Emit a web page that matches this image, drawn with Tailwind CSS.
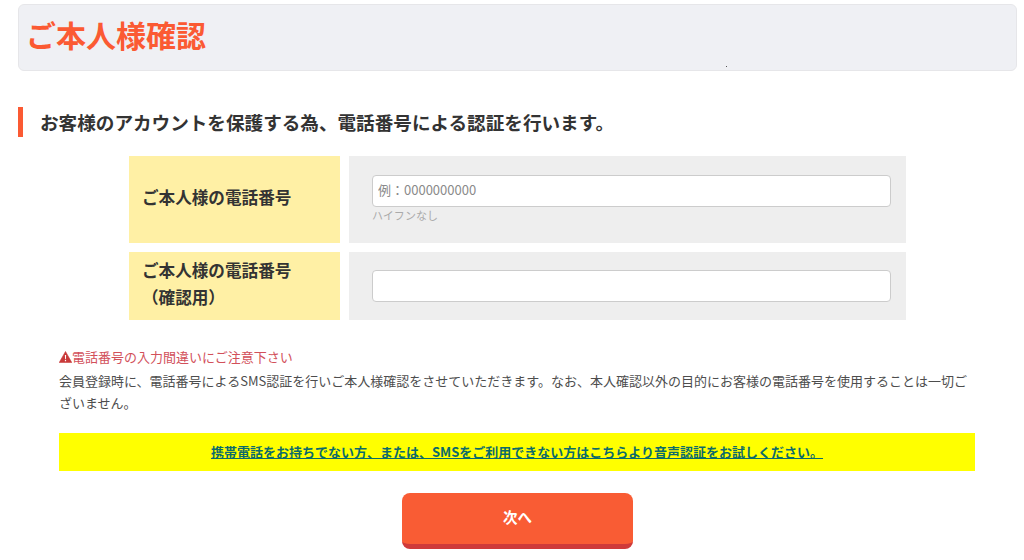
<!DOCTYPE html>
<html lang="ja">
<head>
<meta charset="utf-8">
<script src="https://cdn.jsdelivr.net/npm/@tailwindcss/browser@4"></script>
<title>ご本人様確認</title>
</head>
<body class="bg-white font-['Noto_Sans_CJK_JP','Noto_Sans',sans-serif] text-[#333] overflow-hidden">
<div class="w-[1024px] h-[560px] overflow-hidden pt-[4px]">
  <div class="relative ml-[18px] w-[999px] h-[67px] rounded-[6px] bg-[#eff0f4] border border-[#e6e6e9] flex items-center pl-[7px]">
    <h1 class="text-[30px] font-bold text-[#fb5a33] leading-none -mt-[8px]">ご本人様確認</h1>
    <span class="absolute left-[707px] top-[61px] w-[1px] h-[1px] bg-[#555]"></span>
  </div>
  <div class="ml-[18px] mt-[36px] h-[30px] border-l-[5px] border-[#fb5a33] pl-[17px] flex items-center">
    <h2 class="text-[18.6px] font-bold leading-none text-[#333]">お客様のアカウントを保護する為、電話番号による認証を行います。</h2>
  </div>
  <div class="ml-[129px] mt-[19px] w-[777px] flex flex-col gap-[9px]">
    <div class="flex gap-[9px] h-[87px]">
      <div class="w-[211px] bg-[#fff0a5] flex items-center pl-[13px] pb-[4px] text-[16.6px] font-bold">ご本人様の電話番号</div>
      <div class="flex-1 bg-[#eeeeee] pl-[23px] pr-[15px] pt-[19px]">
        <input type="text" placeholder="例：0000000000" class="block w-full h-[32px] bg-white border border-[#ccc] rounded-[4px] px-[5px] pb-[3px] text-[13px] placeholder:text-[#8a8a8a]">
        <p class="text-[11px] leading-[16px] text-[#aaa]">ハイフンなし</p>
      </div>
    </div>
    <div class="flex gap-[9px] h-[68px]">
      <div class="w-[211px] bg-[#fff0a5] flex items-center pl-[13px] pb-[4px] text-[16.6px] font-bold leading-[27px]">ご本人様の電話番号<br>（確認用）</div>
      <div class="flex-1 bg-[#eeeeee] pl-[23px] pr-[15px] pt-[18px]">
        <input type="text" class="block w-full h-[32px] bg-white border border-[#ccc] rounded-[4px] px-[5px] text-[14px]">
      </div>
    </div>
  </div>
  <div class="ml-[59px] mt-[27px] w-[916px]">
    <p class="flex items-center text-[13px] leading-[20px] text-[#d2505a]">
      <svg class="w-[13px] h-[12px] shrink-0" viewBox="0 0 13 12"><path d="M6.5 .5 L12.8 11.6 H.2 Z" fill="#c93a3a" stroke="#c93a3a" stroke-linejoin="round" stroke-width=".6"/><path d="M5.9 4h1.2l-.2 4.2h-.8zM5.9 9h1.2v1.2H5.9z" fill="#fff"/></svg><span>電話番号の入力間違いにご注意下さい</span>
    </p>
    <p class="mt-[4px] text-[13px] leading-[22px] text-[#4d4d4d] -translate-y-[1px]">会員登録時に、電話番号によるSMS認証を行いご本人様確認をさせていただきます。なお、本人確認以外の目的にお客様の電話番号を使用することは一切ございません。</p>
    <div class="mt-[18px] h-[38px] bg-[#ffff00] flex items-center justify-center">
      <a href="#" class="text-[13px] font-bold underline text-[#0c6b6b] -mt-[1px]">携帯電話をお持ちでない方、または、SMSをご利用できない方はこちらより音声認証をお試しください。</a>
    </div>
  </div>
  <button class="block ml-[402px] mt-[22px] w-[231px] h-[56px] rounded-[8px] bg-[#f95c34] border-b-[5px] border-[#cf3a3a] text-white text-[14.5px] font-bold pb-[3px]">次へ</button>
</div>
</body>
</html>
